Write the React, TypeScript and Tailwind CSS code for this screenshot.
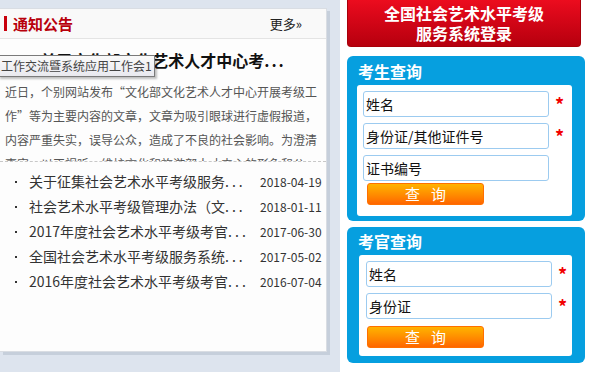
const cjk = "font-['Noto_Sans_CJK_SC',sans-serif]";

const news = [
  { title: "关于征集社会艺术水平考级服务", date: "2018-04-19" },
  { title: "社会艺术水平考级管理办法（文", date: "2018-01-11" },
  { title: "2017年度社会艺术水平考级考官", date: "2017-06-30" },
  { title: "全国社会艺术水平考级服务系统", date: "2017-05-02" },
  { title: "2016年度社会艺术水平考级考官", date: "2016-07-04" },
];

function Field({ label, required }: { label: string; required?: boolean }) {
  return (
    <div className="flex items-start">
      <input
        readOnly
        placeholder={label}
        className="w-[186px] h-[26px] border border-[#9ccbf0] rounded-[3px] px-[2px] text-[14px] placeholder:text-[#111] outline-none bg-white"
      />
      {required && (
        <span className="ml-[6px] mt-[4px] text-[18px] leading-[18px] font-bold text-[#f20000]">*</span>
      )}
    </div>
  );
}

function QueryButton() {
  return (
    <button className="w-[117px] h-[22px] rounded-[3px] border border-[#ff7000] bg-linear-to-b from-[#ffb300] to-[#ff6500] flex items-center justify-center gap-[11px] text-white text-[15px]">
      <span>查</span>
      <span>询</span>
    </button>
  );
}

export default function App() {
  return (
    <div className={`w-[595px] h-[372px] flex overflow-hidden bg-white ${cjk}`}>
      {/* left: notice board */}
      <div className="w-[340px] h-full bg-[#dde4ee] pt-2">
        <div className="relative w-[327px] h-[344px] bg-[#fdfdfd] border-t border-r border-b border-[#d9dde3] shadow-[3px_3px_0_#c6cfdb]">
          <div className="h-[30px] flex items-center justify-between border-b border-[#e4e4e4] bg-[#f9f9f9]">
            <div className="flex items-center">
              <span className="ml-[4px] w-[3px] h-[15px] bg-[#c8000c]" />
              <span className="ml-[6px] text-[15px] font-bold text-[#b8000c] leading-none">通知公告</span>
            </div>
            <span className="mr-[24px] text-[13px] text-[#222]">更多»</span>
          </div>

          <div className="h-[41px] flex items-center justify-center text-[16px] font-bold text-[#111]">
            关于文化部文化艺术人才中心考<span className="tracking-[2px]">...</span>
          </div>

          <div className="h-[82px] overflow-hidden border-b border-dashed border-[#c8c8c8]">
            <p className="w-[313px] pl-[5px] box-content text-[12px] leading-[24px] text-[#555]">
              近日，个别网站发布“文化部文化艺术人才中心开展考级工作”等为主要内容的文章，文章为吸引眼球进行虚假报道，内容严重失实，误导公众，造成了不良的社会影响。为澄清事实，以正视听，维护文化和旅游部人才中心的形象和公
            </p>
          </div>

          <ul className="pt-[7px]">
            {news.map((n) => (
              <li key={n.date} className="h-[25px] flex items-center text-[#333]">
                <span className="ml-[15px] mr-[12px] w-[2px] h-[2px] bg-[#333]" />
                <span className="w-[231px] text-[14px] whitespace-nowrap">
                  {n.title}
                  <span className="tracking-[3px]">...</span>
                </span>
                <span className="text-[12px]">{n.date}</span>
              </li>
            ))}
          </ul>

          <div className="absolute left-[-2px] top-[46px] h-[22px] w-[157px] flex items-center pl-[2px] border border-[#7a7a7a] bg-linear-to-b from-[#fafafa] to-[#e9e9ef] shadow-[2px_2px_2px_rgba(0,0,0,0.25)] text-[12px] text-[#444] whitespace-nowrap">
            工作交流暨系统应用工作会1
          </div>
        </div>
      </div>

      {/* right: login + queries */}
      <div className="flex-1 pl-[7px]">
        <div className="w-[234px] h-[47px] rounded-b-[4px] border border-t-0 border-[#a8000a] bg-linear-to-b from-[#ec0c1e] to-[#b6000e] flex flex-col items-center justify-center text-white font-bold text-[16px] leading-[20px]">
          <span>全国社会艺术水平考级</span>
          <span>服务系统登录</span>
        </div>

        <div className="mt-[9px] w-[238px] h-[165px] rounded-[6px] bg-[#069fdf] flex flex-col">
          <div className="h-[29px] pl-[11px] flex items-center text-white font-bold text-[16px]">考生查询</div>
          <div className="ml-[10px] mr-[13px] h-[131px] rounded-[3px] bg-white pl-[6px] pt-[6px] flex flex-col gap-[6px]">
            <Field label="姓名" required />
            <Field label="身份证/其他证件号" required />
            <Field label="证书编号" />
            <div className="-mt-[4px] pl-[4px]">
              <QueryButton />
            </div>
          </div>
        </div>

        <div className="mt-[6px] w-[238px] h-[136px] rounded-[6px] bg-[#069fdf] flex flex-col">
          <div className="h-[28px] pl-[11px] flex items-center text-white font-bold text-[16px]">考官查询</div>
          <div className="ml-[12px] mr-[13px] h-[101px] rounded-[3px] bg-white pl-[7px] pt-[6px] flex flex-col gap-[6px]">
            <Field label="姓名" required />
            <Field label="身份证" required />
            <div className="mt-[1px] pl-[1px]">
              <QueryButton />
            </div>
          </div>
        </div>
      </div>
    </div>
  );
}
